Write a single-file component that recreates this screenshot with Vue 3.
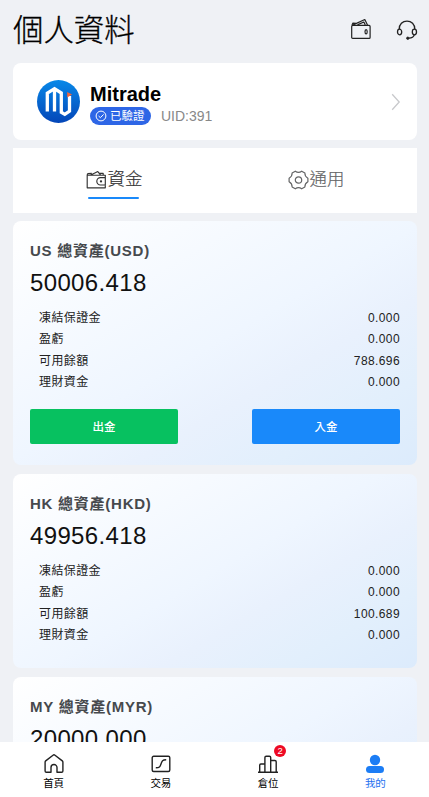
<script setup>
const rows = (free) => [
  ['凍結保證金', '0.000'],
  ['盈虧', '0.000'],
  ['可用餘額', free],
  ['理財資金', '0.000'],
]
const accounts = [
  { region: 'US', code: 'USD', total: '50006.418', rows: rows('788.696'), actions: true },
  { region: 'HK', code: 'HKD', total: '49956.418', rows: rows('100.689') },
  { region: 'MY', code: 'MYR', total: '20000.000', rows: [] },
]
</script>

<template>
  <div class="page">
    <main class="content">
      <header class="top">
        <h1>個人資料</h1>
        <div class="tools">
          <svg width="22" height="22" viewBox="0 0 22 22" fill="none" stroke="#222" stroke-width="1.2" stroke-linejoin="round">
            <rect x="1.7" y="7.4" width="18.4" height="13" rx="1" />
            <path d="M2 7.2 2.8 5.2 6 5.3M3.2 6.9 14.8 1.5l2.7 5.4M7.5 6.9l6.3-2.9 1.5 2.9" />
            <ellipse cx="16.1" cy="13.8" rx="1.1" ry="2.1" />
          </svg>
          <svg class="headset" width="22" height="22" viewBox="0 0 22 22" fill="none" stroke="#222" stroke-width="1.3">
            <path d="M3.2 10.2C3.2 5.3 6.5 2.1 11 2.1s7.8 3.2 7.8 8.1" />
            <ellipse cx="3.6" cy="13" rx="2.1" ry="2.8" />
            <ellipse cx="18.4" cy="13" rx="2.1" ry="2.8" />
            <path d="M18.2 15.8c-.5 2.1-2.3 3.2-5.5 3.4" />
            <circle cx="11.8" cy="19.2" r="1.2" fill="#222" stroke-width=".8" />
          </svg>
        </div>
      </header>

      <section class="profile">
        <svg class="avatar" width="43" height="43" viewBox="0 0 43 43">
          <defs>
            <linearGradient id="disc" x1="0" y1="0" x2="0" y2="1">
              <stop offset="0" stop-color="#0788e8" />
              <stop offset="1" stop-color="#0446b8" />
            </linearGradient>
          </defs>
          <circle cx="21.5" cy="21.5" r="21.500" fill="url(#disc)" />
          <path d="M10.300 31.500V13.200L17.500 8.700 24.300 13V32.200L27.800 34.300 32.500 31.200V16M17.500 9V31.500" fill="none" stroke="#fff" stroke-width="3.300" />
          <path d="m30.200 12 4.800 2.600-4.800 3z" fill="#f0643a" />
        </svg>
        <div class="who">
          <div class="name">Mitrade</div>
          <div class="meta">
            <span class="verified">
              <svg width="12" height="12" viewBox="0 0 12 12" fill="none" stroke="#fff" stroke-width="1">
                <circle cx="6" cy="6" r="4.900" />
                <path d="m3.600 6 1.800 1.700 3.200-3.300" />
              </svg>
              已驗證
            </span>
            <span class="uid">UID:391</span>
          </div>
        </div>
        <svg class="chevron" width="10" height="18" viewBox="0 0 10 18" fill="none" stroke="#c8c9cc" stroke-width="1.300">
          <path d="m1.200 1.300 7 7.700-7 7.700" />
        </svg>
      </section>

      <nav class="tabs">
        <div class="tab active">
          <div class="tab-label">
            <svg width="21" height="20" viewBox="0 0 21 20" fill="none" stroke="#333" stroke-width="1.150" stroke-linejoin="round">
              <path d="M19.300 7.500V5.200H1.200v12.600h18.100v-2.600M1.200 5.200C1.200 3.500 2 3.300 5.800 3.300M4.800 5l7-3.400 2.700 3.300M13.500 3.400h3.700v1.800" />
              <path d="M19.300 7.600h-4.800a3.700 3.700 0 0 0 0 7.400h4.800z" />
              <circle cx="15" cy="11.300" r=".6" />
            </svg>
            <span>資金</span>
          </div>
        </div>
        <div class="tab">
          <div class="tab-label">
            <svg width="21" height="20" viewBox="0 0 21 20" fill="none" stroke="#646566" stroke-width="1.200" stroke-linejoin="round">
              <path d="M7.300 1.200c1.800 1.300 4.600 1.300 6.400 0l3.200 1.900c-.1 2.200 1 4 3 5.100v3.600c-2 1.100-3.100 2.900-3 5.100l-3.200 1.900c-1.800-1.300-4.600-1.300-6.400 0l-3.200-1.900c.1-2.200-1-4-3-5.100V8.200c2-1.100 3.100-2.900 3-5.100z" />
              <circle cx="10.500" cy="10" r="3.200" />
            </svg>
            <span>通用</span>
          </div>
        </div>
      </nav>

      <section v-for="a in accounts" :key="a.code" class="account" :class="{ tall: a.actions }">
        <div class="caption">{{ a.region }} 總資產({{ a.code }})</div>
        <div class="total">{{ a.total }}</div>
        <dl>
          <div v-for="[label, value] in a.rows" :key="label" class="row">
            <dt>{{ label }}</dt>
            <dd>{{ value }}</dd>
          </div>
        </dl>
        <div v-if="a.actions" class="actions">
          <button class="withdraw">出金</button>
          <button class="deposit">入金</button>
        </div>
      </section>
    </main>

    <footer class="tabbar">
      <div class="item">
        <svg width="22" height="22" viewBox="0 0 22 22" fill="none" stroke="#222" stroke-width="1.400" stroke-linejoin="round">
          <path d="M8 19.300H3.400A1.300 1.300 0 0 1 2.100 18V9.200q0-.8.6-1.300L10 2.200q1-.8 2 0l7.300 5.700q.6.5.6 1.300V18a1.300 1.300 0 0 1-1.300 1.300H14V14.500a3 3 0 0 0-6 0z" />
        </svg>
        <span>首頁</span>
      </div>
      <div class="item">
        <svg width="22" height="22" viewBox="0 0 22 22" fill="none" stroke="#222" stroke-width="1.400">
          <rect x="2.200" y="3.300" width="17.600" height="15.200" rx="1.500" />
          <path d="M5.800 14.800c4.200 0 4.200-1 5.200-3.900s1.300-4.100 5.200-4.100" />
        </svg>
        <span>交易</span>
      </div>
      <div class="item">
        <div class="icon">
          <svg width="22" height="22" viewBox="0 0 22 22" fill="none" stroke="#222" stroke-width="1.400" stroke-linejoin="round">
            <path d="M1 19.200h20M2.700 19V12.200q0-1.200 1.200-1.200h4M7.900 19V4.600q0-1.300 1.300-1.300h3.200q1.300 0 1.300 1.300V19M13.700 7.500h4.200q1.300 0 1.300 1.300V19" />
          </svg>
          <b class="badge">2</b>
        </div>
        <span>倉位</span>
      </div>
      <div class="item current">
        <svg width="22" height="22" viewBox="0 0 22 22" fill="#1c7df5">
          <circle cx="11" cy="7" r="5.200" />
          <rect x="2" y="13" width="18" height="7" rx="3.500" />
        </svg>
        <span>我的</span>
      </div>
    </footer>
  </div>
</template>

<style>
body {
  background: #eff1f5;
}
</style>

<style scoped>
.page {
  display: flex;
  flex-direction: column;
  height: 797px;
  background: #eff1f5;
  color: #000;
  font-family: "Liberation Sans", "Noto Sans CJK TC", sans-serif;
}
.content {
  flex: 1;
  min-height: 0;
  padding: 0 12px 0 13px;
  overflow: hidden;
}
.top {
  display: flex;
  justify-content: space-between;
  height: 63px;
}
h1 {
  margin: 0;
  font-size: 30.400px;
  font-weight: 300;
  line-height: 60px;
  -webkit-text-stroke: 0.300px #000;
}
.tools {
  display: flex;
  gap: 24px;
  margin-right: -1px;
  padding-top: 18px;
}
.headset {
  margin-top: 1px;
}
.profile {
  display: flex;
  align-items: center;
  box-sizing: border-box;
  height: 77px;
  padding: 0 16px 0 24px;
  border-radius: 8px;
  background: #fff;
}
.who {
  flex: 1;
  padding: 5px 0 0 10px;
}
.name {
  font-size: 20px;
  font-weight: 700;
  line-height: 24px;
}
.meta {
  display: flex;
  align-items: center;
  gap: 10px;
  height: 21px;
}
.verified {
  display: flex;
  align-items: center;
  gap: 3px;
  box-sizing: border-box;
  width: 61px;
  height: 18px;
  padding-left: 5px;
  border-radius: 9px;
  background: #2e66e6;
  color: #fff;
  font-size: 11.500px;
  line-height: 18px;
  white-space: nowrap;
}
.verified svg {
  flex: none;
}
.uid {
  color: #888;
  font-size: 14px;
  line-height: 18px;
}
.tabs {
  display: flex;
  height: 65px;
  margin: 8px 0;
  background: #fff;
}
.tab {
  display: flex;
  flex: 1;
  flex-direction: column;
  align-items: center;
  padding-top: 20px;
  color: #646566;
  font-size: 17.400px;
  font-weight: 300;
  -webkit-text-stroke: 0.200px currentColor;
}
.tab-label {
  display: flex;
  align-items: center;
  gap: 1px;
  height: 24px;
}
.tab-label span {
  line-height: 22px;
  padding-bottom: 2px;
}
.active {
  color: #323233;
}
.active::after {
  width: 51px;
  height: 2px;
  margin: 5px 2px 0 0;
  border-radius: 1px;
  background: #1989fa;
  content: "";
}
.account {
  box-sizing: border-box;
  height: 194px;
  margin-bottom: 9px;
  padding: 20px 17px 0;
  border-radius: 8px;
  background: linear-gradient(150deg, #fff 0%, #eff6ff 50%, #e9f1fd 65%, #e2effc 82%, #dcebfc 100%);
}
.account.tall {
  height: 244px;
}
.caption {
  color: #46494d;
  font-size: 15px;
  font-weight: 700;
  letter-spacing: 0.750px;
  line-height: 20px;
}
.total {
  margin-top: 8px;
  color: #111;
  font-size: 24px;
  letter-spacing: 0.350px;
  line-height: 28px;
}
dl {
  margin: 11px 0 0;
}
.row {
  display: flex;
  justify-content: space-between;
  padding-left: 9px;
  color: #222;
  font-size: 12px;
  letter-spacing: 0.400px;
  line-height: 21.400px;
}
dt,
dd {
  margin: 0;
}
.actions {
  display: flex;
  justify-content: space-between;
  margin-top: 15px;
}
button {
  width: 148px;
  height: 35px;
  padding: 0 0 1px;
  border: 0;
  border-radius: 2px;
  color: #fff;
  font-family: inherit;
  font-size: 11.500px;
  font-weight: 500;
}
.withdraw {
  background: #07c160;
}
.deposit {
  background: #1989fa;
}
.tabbar {
  display: flex;
  flex: none;
  box-sizing: border-box;
  height: 55px;
  padding-top: 11px;
  background: #fff;
}
.item {
  display: flex;
  flex: 1;
  flex-direction: column;
  align-items: center;
  font-size: 10.500px;
  line-height: 16px;
}
.item svg {
  display: block;
}
.current {
  color: #1c6ff0;
}
.icon {
  position: relative;
}
.badge {
  position: absolute;
  top: -8px;
  right: -7px;
  width: 12px;
  height: 12px;
  border-radius: 50%;
  background: #ee0a24;
  color: #fff;
  font-size: 9.500px;
  font-weight: 400;
  line-height: 12px;
  text-align: center;
}
</style>
